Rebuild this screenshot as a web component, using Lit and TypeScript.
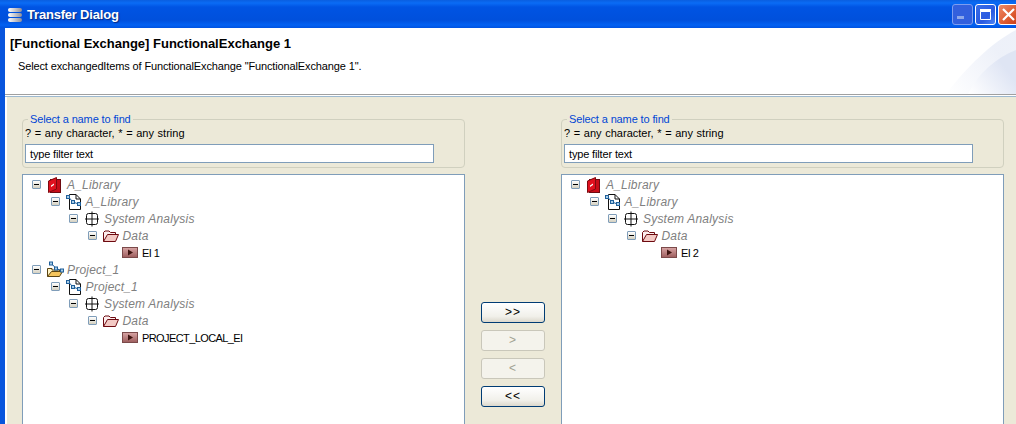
import { LitElement, css, html, svg } from "lit";
import { customElement } from "lit/decorators.js";

type IconName = "book" | "model" | "grid" | "folder" | "item" | "project";
type TreeRow = { level: number; icon: IconName; label: string; plain?: boolean };

const leftRows: TreeRow[] = [
  { level: 0, icon: "book", label: "A_Library" },
  { level: 1, icon: "model", label: "A_Library" },
  { level: 2, icon: "grid", label: "System Analysis" },
  { level: 3, icon: "folder", label: "Data" },
  { level: 4, icon: "item", label: "EI 1", plain: true },
  { level: 0, icon: "project", label: "Project_1" },
  { level: 1, icon: "model", label: "Project_1" },
  { level: 2, icon: "grid", label: "System Analysis" },
  { level: 3, icon: "folder", label: "Data" },
  { level: 4, icon: "item", label: "PROJECT_LOCAL_EI", plain: true },
];

const rightRows: TreeRow[] = [
  { level: 0, icon: "book", label: "A_Library" },
  { level: 1, icon: "model", label: "A_Library" },
  { level: 2, icon: "grid", label: "System Analysis" },
  { level: 3, icon: "folder", label: "Data" },
  { level: 4, icon: "item", label: "EI 2", plain: true },
];

const nodes = svg`
  <path d="M2.5 3 L7 8 L12.5 10" fill="none" stroke="#1f5f9a" />
  <g fill="#a8cde8" stroke="#1f5f9a" stroke-width="1">
    <rect x=".5" y="1.5" width="3" height="3" />
    <rect x="5.5" y="6.5" width="3" height="3" />
    <rect x="11.5" y="8.5" width="3" height="3" />
  </g>`;

const icons: Record<IconName, unknown> = {
  book: svg`
    <rect x="3.5" y="2.5" width="10" height="13" fill="#c80c18" stroke="#6d0a10" />
    <path d="M1.5 4 L9.5 .5 V12 L1.5 15.5 Z" fill="#e0101e" stroke="#7d0a10" />
    <path d="M4 8.5 L7 6.5 V8 L4 10 Z" fill="#fff" />`,
  model: svg`
    <path d="M3.5 .5 H10 L14.5 5 V15.5 H3.5 Z" fill="#fff" stroke="#111" />
    <path d="M10 .5 V5 H14.5" fill="none" stroke="#111" />
    ${nodes}`,
  grid: svg`
    <rect x="2.5" y="2.5" width="11" height="11" rx="2" fill="none" stroke="#111" />
    <path d="M8 .5 V15.5 M1 8 H15" stroke="#111" />`,
  folder: svg`
    <path d="M.5 13.5 V4.5 L2 3 H6 L7.5 4.5 H12.5 V6.5" fill="#fbeeee" stroke="#6d0a10" />
    <path d="M.5 13.5 L4.5 6.5 H15.5 L12.5 13.5 Z" fill="#f3c9c4" stroke="#6d0a10" />`,
  item: svg`
    <defs>
      <linearGradient id="ei" x1="0" y1="0" x2="0" y2="1">
        <stop offset="0" stop-color="#d9a6a6" />
        <stop offset="1" stop-color="#9c5c5c" />
      </linearGradient>
    </defs>
    <rect x=".5" y="2.5" width="15" height="10" fill="url(#ei)" stroke="#7b4a4a" />
    <path d="M6 4.5 L11 7.5 L6 10.5 Z" fill="#3d1410" />`,
  project: svg`
    <path d="M.5 14.5 V6.5 H5 V8 H12.5 V9" fill="#fff3c4" stroke="#5a4413" />
    <path d="M.5 14.5 L4.5 9.5 H15.5 L12.5 14.5 Z" fill="#f5c55c" stroke="#5a4413" />
    <g transform="translate(2 -1.5)">${nodes}</g>`,
};

@customElement("tree-panel")
export class TreePanel extends LitElement {
  static properties = { rows: { attribute: false } };
  rows: TreeRow[] = [];

  static styles = css`
    :host {
      display: block;
    }
    .filter {
      position: relative;
      height: 49px;
      box-sizing: border-box;
      border: 1px solid #d0d0bf;
      border-radius: 4px;
      padding: 7px 30px 0 2px;
    }
    .legend {
      position: absolute;
      top: -7px;
      left: 5px;
      padding: 0 2px;
      background: #ece9d8;
      color: #0046d5;
      line-height: 13px;
      letter-spacing: -0.13px;
    }
    .hint {
      line-height: 13px;
      word-spacing: 0.6px;
    }
    .input {
      height: 19px;
      box-sizing: border-box;
      margin-top: 4px;
      border: 1px solid #7f9db9;
      background: #fff;
      padding-left: 4px;
      line-height: 19px;
      letter-spacing: -0.15px;
    }
    .tree {
      margin-top: 6px;
      height: 300px;
      box-sizing: border-box;
      border: 1px solid #7f9db9;
      background: #fff;
      padding-top: 1px;
    }
    .row {
      display: flex;
      align-items: center;
      height: 17px;
    }
    .toggle {
      width: 9px;
      height: 9px;
      box-sizing: border-box;
      border: 1px solid #7f9db9;
      border-radius: 1px;
      background: linear-gradient(#fff, #d4d0c0);
      display: flex;
      align-items: center;
      justify-content: center;
      margin-right: 6px;
    }
    .toggle::after {
      content: "";
      width: 5px;
      height: 1px;
      background: #000;
    }
    .spacer {
      width: 16px;
    }
    svg {
      display: block;
      flex: none;
      overflow: visible;
    }
    .label {
      margin-left: 4px;
      color: #808080;
      font-size: 12px;
      font-style: italic;
      letter-spacing: 0.2px;
      white-space: nowrap;
    }
    .label.plain {
      color: #000;
      font-size: 11px;
      font-style: normal;
      letter-spacing: -0.6px;
    }
  `;

  render() {
    return html`
      <div class="filter">
        <div class="legend">Select a name to find</div>
        <div class="hint">? = any character, * = any string</div>
        <div class="input">type filter text</div>
      </div>
      <div class="tree">
        ${this.rows.map(
          (r) => html`<div class="row" style="padding-left:${9 + r.level * 18.5}px">
            ${r.plain ? html`<span class="spacer"></span>` : html`<span class="toggle"></span>`}
            <svg width="16" height="16" viewBox="0 0 16 16">${icons[r.icon]}</svg>
            <span class="label ${r.plain ? "plain" : ""}">${r.label}</span>
          </div>`
        )}
      </div>
    `;
  }
}

@customElement("app-root")
export class AppRoot extends LitElement {
  static styles = css`
    :host {
      display: block;
      width: 1016px;
      height: 424px;
      overflow: hidden;
      background: #0855dd;
      font-family: "Liberation Sans", Arial, sans-serif;
      font-size: 11px;
      color: #000;
    }
    .titlebar {
      height: 28px;
      display: flex;
      align-items: center;
      padding-left: 7px;
      background: linear-gradient(
        #0a5ee0 0,
        #0a6cf5 3px,
        #0054e3 7px,
        #0050dc 20px,
        #0361f2 25px,
        #0053e0 28px
      );
    }
    .title {
      margin-left: 4px;
      color: #fff;
      font: bold 13px "Liberation Sans", sans-serif;
      letter-spacing: -0.2px;
      text-shadow: 1px 1px 1px #0a2a80;
    }
    .winbtns {
      margin-left: auto;
      display: flex;
      gap: 2px;
      margin-right: -3px;
    }
    .winbtn {
      width: 21px;
      height: 21px;
      box-sizing: border-box;
      border: 1px solid #fff;
      border-radius: 3px;
      background: linear-gradient(135deg, #3a6ee8, #2a5ae0 60%, #4f86f5);
      display: flex;
      align-items: center;
      justify-content: center;
    }
    .winbtn.min {
      border-color: #7d9df0;
      background: #3360dd;
    }
    .winbtn.close {
      background: linear-gradient(135deg, #ee8a66, #dd5a30 60%, #c93c16);
    }
    .frame {
      margin-left: 5px;
      background: #fff;
    }
    .header {
      position: relative;
      height: 66px;
      box-sizing: border-box;
      padding: 8px 0 0 5px;
      overflow: hidden;
    }
    .heading {
      font: bold 13px "Liberation Sans", sans-serif;
      line-height: 16px;
    }
    .desc {
      margin: 8px 0 0 8px;
      line-height: 13px;
      letter-spacing: -0.13px;
    }
    .swoosh {
      position: absolute;
      right: 0;
      top: 0;
    }
    .rule {
      height: 3px;
      border-top: 1px solid #a0a0a0;
      border-bottom: 1px solid #9db9d0;
      box-sizing: border-box;
    }
    .body {
      margin-left: 2px;
      height: 327px;
      background: #ece9d8;
      display: grid;
      grid-template-columns: 443px 96px 443px;
      padding: 22px 0 0 15px;
      box-sizing: border-box;
    }
    .moves {
      display: flex;
      flex-direction: column;
      align-items: center;
      gap: 7px;
      padding-top: 183px;
    }
    .move {
      width: 64px;
      height: 21px;
      box-sizing: border-box;
      border: 1px solid #003c74;
      border-radius: 3px;
      background: linear-gradient(#fff, #f1f0ea 70%, #dcd8cc);
      text-align: center;
      font-size: 12px;
      line-height: 19px;
      letter-spacing: 1px;
    }
    .move.off {
      border-color: #c9c7ba;
      background: #f4f3ec;
      color: #a1a192;
    }
  `;

  render() {
    return html`
      <div class="titlebar">
        <svg width="16" height="16" viewBox="0 0 16 16">
          <defs>
            <linearGradient id="disk" x1="0" y1="0" x2="1" y2="0">
              <stop offset="0" stop-color="#fff" />
              <stop offset="1" stop-color="#8f8f9a" />
            </linearGradient>
          </defs>
          <rect x="1" y="2" width="14" height="4" rx="2" fill="url(#disk)" />
          <rect x="1" y="7" width="14" height="4" rx="2" fill="url(#disk)" />
          <rect x="1" y="12" width="14" height="4" rx="2" fill="url(#disk)" />
        </svg>
        <span class="title">Transfer Dialog</span>
        <div class="winbtns">
          <div class="winbtn min">
            <svg width="13" height="13" viewBox="0 0 13 13">
              <rect x="1" y="8" width="7" height="3" fill="#8ea8ea" />
            </svg>
          </div>
          <div class="winbtn">
            <svg width="13" height="13" viewBox="0 0 13 13">
              <path d="M1.5 3.5 H11.5 V11.5 H1.5 Z" fill="none" stroke="#fff" />
              <rect x="1" y="1" width="11" height="2.5" fill="#fff" />
            </svg>
          </div>
          <div class="winbtn close">
            <svg width="13" height="13" viewBox="0 0 13 13">
              <path d="M1 1 L12 12 M12 1 L1 12" stroke="#fff" stroke-width="2.2" />
            </svg>
          </div>
        </div>
      </div>
      <div class="frame">
        <div class="header">
          <svg class="swoosh" width="70" height="66" viewBox="0 0 70 66">
            <defs>
              <linearGradient id="sw" x1="0" y1="1" x2="1" y2="0.3">
                <stop offset="0" stop-color="#fff" />
                <stop offset="0.8" stop-color="#dfe5f4" />
              </linearGradient>
            </defs>
            <path d="M0 66 C20 40 45 15 70 2 V66 Z" fill="url(#sw)" opacity="0.55" />
            <path d="M22 66 C32 45 50 30 70 22 V66 Z" fill="url(#sw)" />
          </svg>
          <div class="heading">[Functional Exchange] FunctionalExchange 1</div>
          <div class="desc">Select exchangedItems of FunctionalExchange "FunctionalExchange 1".</div>
        </div>
        <div class="rule"></div>
        <div class="body">
          <tree-panel .rows=${leftRows}></tree-panel>
          <div class="moves">
            <div class="move">&gt;&gt;</div>
            <div class="move off">&gt;</div>
            <div class="move off">&lt;</div>
            <div class="move">&lt;&lt;</div>
          </div>
          <tree-panel .rows=${rightRows}></tree-panel>
        </div>
      </div>
    `;
  }
}
